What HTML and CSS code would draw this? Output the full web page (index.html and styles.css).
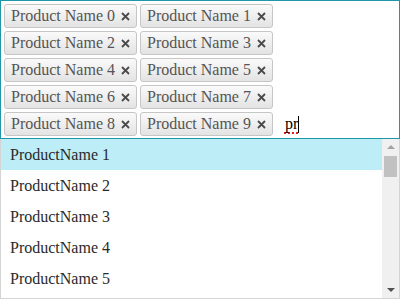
FILE: index.html
```html
<!DOCTYPE html>
<html>
<head>
<meta charset="utf-8">
<link rel="stylesheet" href="styles.css">
</head>
<body>
<div class="picker">
  <div class="box">
    <span class="tag">Product Name 0<svg class="x" viewBox="0 0 9 9"><path d="M1 1L8 8M8 1L1 8"/></svg></span>
    <span class="tag">Product Name 1<svg class="x" viewBox="0 0 9 9"><path d="M1 1L8 8M8 1L1 8"/></svg></span>
    <span class="tag">Product Name 2<svg class="x" viewBox="0 0 9 9"><path d="M1 1L8 8M8 1L1 8"/></svg></span>
    <span class="tag">Product Name 3<svg class="x" viewBox="0 0 9 9"><path d="M1 1L8 8M8 1L1 8"/></svg></span>
    <span class="tag">Product Name 4<svg class="x" viewBox="0 0 9 9"><path d="M1 1L8 8M8 1L1 8"/></svg></span>
    <span class="tag">Product Name 5<svg class="x" viewBox="0 0 9 9"><path d="M1 1L8 8M8 1L1 8"/></svg></span>
    <span class="tag">Product Name 6<svg class="x" viewBox="0 0 9 9"><path d="M1 1L8 8M8 1L1 8"/></svg></span>
    <span class="tag">Product Name 7<svg class="x" viewBox="0 0 9 9"><path d="M1 1L8 8M8 1L1 8"/></svg></span>
    <span class="tag">Product Name 8<svg class="x" viewBox="0 0 9 9"><path d="M1 1L8 8M8 1L1 8"/></svg></span>
    <span class="tag">Product Name 9<svg class="x" viewBox="0 0 9 9"><path d="M1 1L8 8M8 1L1 8"/></svg></span>
    <span class="input"><span class="typed">pr</span><span class="caret"></span></span>
  </div>
  <div class="dropdown">
    <ul class="list">
      <li class="item active">ProductName 1</li>
      <li class="item">ProductName 2</li>
      <li class="item">ProductName 3</li>
      <li class="item">ProductName 4</li>
      <li class="item">ProductName 5</li>
    </ul>
    <div class="scrollbar">
      <div class="arrow up"></div>
      <div class="thumb"></div>
      <div class="track"></div>
      <div class="arrow down"></div>
    </div>
  </div>
</div>
</body>
</html>
```

FILE: styles.css
```css
html, body {
  margin: 0;
  padding: 0;
  background: #ffffff;
}
body {
  font-family: "Liberation Serif", "Times New Roman", serif;
  font-size: 16px;
  width: 400px;
  height: 300px;
  overflow: hidden;
}
.picker {
  width: 400px;
}
.box {
  box-sizing: border-box;
  width: 400px;
  height: 139px;
  border: 1px solid #1f97a8;
  padding: 3px 3px 2px 3px;
  display: flex;
  flex-wrap: wrap;
  align-content: flex-start;
  gap: 3px 3px;
}
.tag {
  box-sizing: border-box;
  height: 24px;
  display: inline-flex;
  align-items: center;
  border: 1px solid #c6c6c6;
  border-radius: 3px;
  background: linear-gradient(#fafafa, #e3e3e3);
  padding: 0 6px 0 6px;
  color: #555555;
  line-height: 1;
  white-space: nowrap;
}
.x {
  width: 9px;
  height: 9px;
  margin-left: 6px;
  margin-top: 1px;
}
.x path {
  stroke: #4a4a4a;
  stroke-width: 1.8;
  fill: none;
}
.input {
  height: 24px;
  display: inline-flex;
  align-items: center;
  padding-left: 9px;
  color: #000;
}
.typed {
  text-decoration: underline dotted #e02020;
  text-decoration-thickness: 2px;
  text-underline-offset: 3px;
}
.caret {
  width: 1px;
  height: 17px;
  background: #000;
}
.dropdown {
  box-sizing: border-box;
  width: 400px;
  height: 160px;
  border: 1px solid #d4d4d4;
  border-top: none;
  display: flex;
}
.list {
  flex: 1;
  margin: 0;
  padding: 0;
  list-style: none;
  overflow: hidden;
}
.item {
  height: 31px;
  line-height: 32px;
  padding-left: 9px;
  color: #2a2a2a;
}
.item.active {
  background: #bdeef8;
}
.scrollbar {
  width: 17px;
  background: #f0f0f0;
  display: flex;
  flex-direction: column;
  align-items: center;
}
.arrow {
  width: 0;
  height: 0;
  border-left: 4px solid transparent;
  border-right: 4px solid transparent;
}
.arrow.up {
  margin-top: 6px;
  border-bottom: 4px solid #a3a3a3;
}
.thumb {
  margin-top: 7px;
  width: 13px;
  height: 21px;
  background: #c1c1c1;
}
.track {
  flex: 1;
}
.arrow.down {
  margin-bottom: 6px;
  border-top: 4px solid #505050;
}
```
